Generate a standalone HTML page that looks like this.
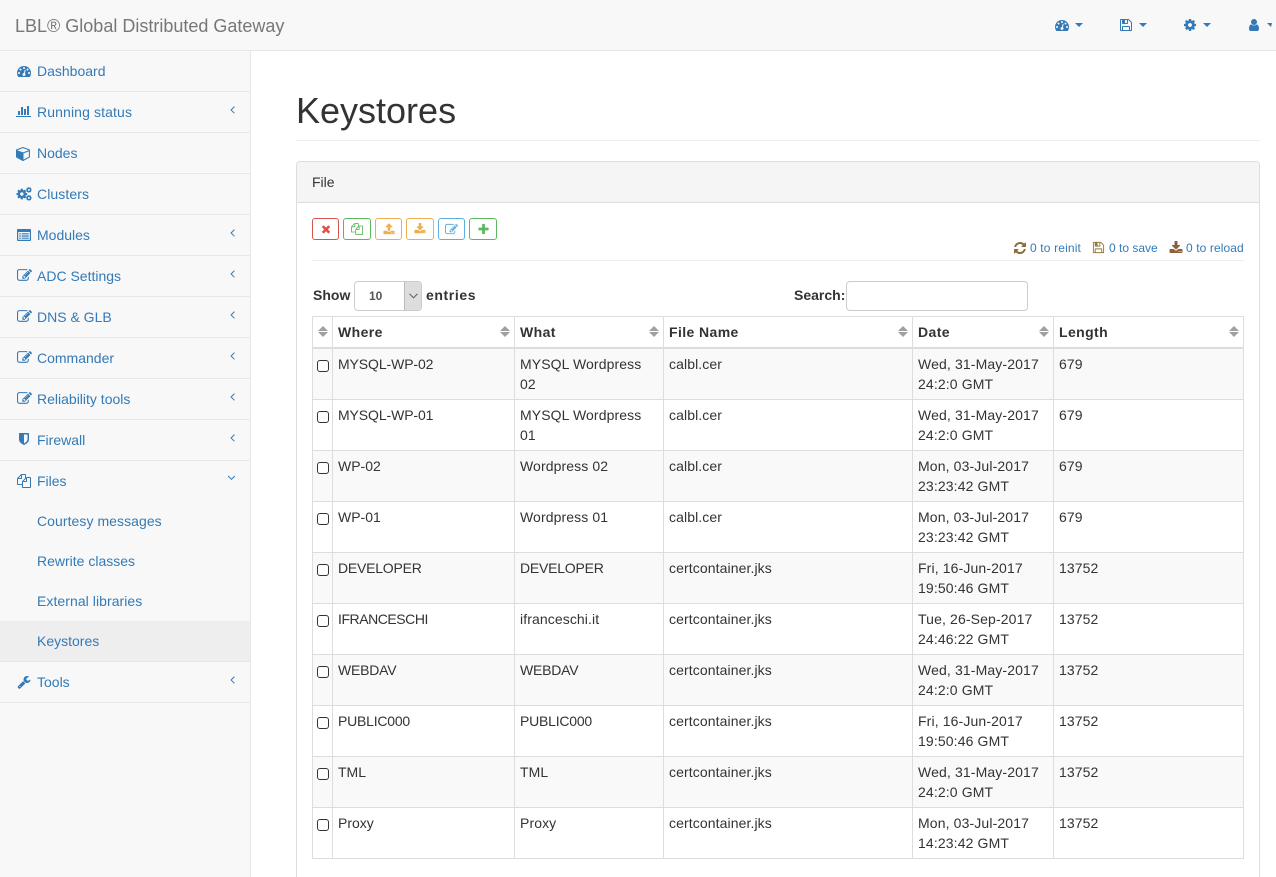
<!DOCTYPE html>
<html><head><meta charset="utf-8"><title>Keystores</title>
<style>
*{box-sizing:border-box}
html,body{margin:0;padding:0;width:1276px;height:877px;overflow:hidden;background:#fff;font:14px/20px "Liberation Sans",sans-serif;color:#333}
#w{position:absolute;left:0;top:0;width:1276px;height:877px;overflow:hidden;background:#fff}
.a,svg{position:absolute}
svg{display:block}
a{color:#337ab7;text-decoration:none}
#nav{left:0;top:0;width:1276px;height:51px;background:#f8f8f8;border-bottom:1px solid #e7e7e7}
#brand{left:15px;top:16px;font-size:18px;color:#777}
.caret{position:absolute;top:23px;width:0;height:0;border-top:4px solid #337ab7;border-left:4px solid transparent;border-right:4px solid transparent}
#side{left:0;top:51px;width:251px;height:826px;background:#f8f8f8;border-right:1px solid #e7e7e7}
.it{position:absolute;left:0;width:250px;height:41px;border-bottom:1px solid #e7e7e7}
.it a{position:absolute;left:37px;top:10px;white-space:nowrap}
.it svg{fill:#337ab7}
.sub{position:absolute;left:0;width:250px;height:40px}
.sub a{position:absolute;left:37px;top:10px}
#h1{left:296px;top:91px;font-size:36px;line-height:40px;color:#333}
#hr1{left:296px;top:140px;width:964px;height:1px;background:#eee}
#panel{left:296px;top:161px;width:964px;height:716px;border:1px solid #ddd;border-bottom:0;border-radius:4px 4px 0 0;background:#fff}
#ph{left:0;top:0;width:962px;height:41px;background:#f5f5f5;border-bottom:1px solid #ddd;border-radius:3px 3px 0 0}
#ph span{position:absolute;left:15px;top:10px}
.btn{position:absolute;top:218px;height:22px;background:#fff;border:1px solid;border-radius:3px}
.st{position:absolute;top:240px;font-size:12px;line-height:16px;color:#337ab7;white-space:nowrap;letter-spacing:.1px}
#hr2{left:312px;top:260px;width:932px;height:1px;background:#eee}
.lb{position:absolute;font-weight:700;white-space:nowrap}
#sel{left:354px;top:281px;width:68px;height:30px;border:1px solid #ccc;border-radius:4px;background:#fff;overflow:hidden}
#sel b{position:absolute;left:14px;top:4px;font-size:12px;color:#555}
#sel i{position:absolute;right:0;top:0;width:17px;height:28px;background:#ddd;border-left:1px solid #bbb}
#srch{left:846px;top:281px;width:182px;height:30px;border:1px solid #ccc;border-radius:4px;background:#fff}
table{position:absolute;left:312px;top:316px;width:931px;table-layout:fixed;border-collapse:collapse}
th,td{border:1px solid #ddd;padding:5px;vertical-align:top;text-align:left;font-size:14px;line-height:20px;position:relative}
th{height:31px;border-bottom:2px solid #ddd;padding:5px 5px 3px;background:#fff;letter-spacing:.4px}
td{height:51px}
td:nth-child(3),td:nth-child(4){letter-spacing:.1px}
td:nth-child(5){letter-spacing:.13px}
td:nth-child(6){letter-spacing:.1px}
td.u{letter-spacing:-.22px}
td.m{letter-spacing:-.1px}
td.i{letter-spacing:-.45px}
tbody tr:nth-child(odd) td{background:#f9f9f9}
tbody tr:nth-child(even) td{background:#fff}
input[type=checkbox]{appearance:none;-webkit-appearance:none;position:absolute;left:4px;top:11px;width:12px;height:12px;margin:0;border:1.5px solid #333;border-radius:3px;background:#fff}
.s{position:absolute;right:4px;top:9px;width:10px;height:12px}
.s:before{content:"";position:absolute;left:0;top:0;border-bottom:5px solid #a0a0a0;border-left:5px solid transparent;border-right:5px solid transparent}
.s:after{content:"";position:absolute;left:0;top:6px;border-top:5px solid #a0a0a0;border-left:5px solid transparent;border-right:5px solid transparent}
</style></head><body>
<div id="w">

<div class="a" id="nav">
<div class="a" id="brand">LBL® Global Distributed Gateway</div>
<svg style="left:1055px;top:18px" width="14" height="14" viewBox="0 0 1792 1792" fill="#337ab7"><path d="M384 1152q0-53-37.5-90.5t-90.5-37.5-90.5 37.5-37.5 90.5 37.5 90.5 90.5 37.5 90.5-37.5 37.5-90.5zm192-448q0-53-37.5-90.5t-90.5-37.5-90.5 37.5-37.5 90.5 37.5 90.5 90.5 37.5 90.5-37.5 37.5-90.5zm428 481l101-382q6-26-7.5-48.5t-38.5-29.5-48 6.5-30 39.5l-101 382q-60 5-107 43.5t-63 98.5q-20 77 20 146t117 89 146-20 89-117q16-60-6-117t-72-91zm660-33q0-53-37.5-90.5t-90.5-37.5-90.5 37.5-37.5 90.5 37.5 90.5 90.5 37.5 90.5-37.5 37.5-90.5zm-640-640q0-53-37.5-90.5t-90.5-37.5-90.5 37.5-37.5 90.5 37.5 90.5 90.5 37.5 90.5-37.5 37.5-90.5zm448 192q0-53-37.5-90.5t-90.5-37.5-90.5 37.5-37.5 90.5 37.5 90.5 90.5 37.5 90.5-37.5 37.5-90.5zm320 448q0 261-141 483-19 29-54 29h-1402q-35 0-54-29-141-221-141-483 0-182 71-348t191-286 286-191 348-71 348 71 286 191 191 286 71 348z"/></svg>
<span class="caret" style="left:1075px"></span>
<svg style="left:1119px;top:18px" width="14" height="14" viewBox="0 0 1792 1792" fill="#337ab7"><path d="M512 1536h768v-384h-768v384zm896 0h128v-896q0-14-10-38.5t-20-34.5l-281-281q-10-10-34-20t-39-10v416q0 40-28 68t-68 28h-576q-40 0-68-28t-28-68v-416h-128v1280h128v-416q0-40 28-68t68-28h832q40 0 68 28t28 68v416zm-384-928v-320q0-13-9.5-22.5t-22.5-9.5h-192q-13 0-22.5 9.5t-9.5 22.5v320q0 13 9.5 22.5t22.5 9.5h192q13 0 22.5-9.5t9.5-22.5zm640 32v928q0 40-28 68t-68 28h-1344q-40 0-68-28t-28-68v-1344q0-40 28-68t68-28h928q40 0 88 20t76 48l280 280q28 28 48 76t20 88z"/></svg>
<span class="caret" style="left:1139px"></span>
<svg style="left:1183px;top:18px" width="14" height="14" viewBox="0 0 1792 1792" fill="#337ab7"><path d="M1152 896q0-106-75-181t-181-75-181 75-75 181 75 181 181 75 181-75 75-181zm512-109v222q0 12-8 23t-20 13l-185 28q-19 54-39 91 35 50 107 138 10 12 10 25t-9 23q-27 37-99 108t-94 71q-12 0-26-9l-138-108q-44 23-91 38-16 136-29 186-7 28-36 28h-222q-14 0-24.5-8.5t-11.5-21.5l-28-184q-49-16-90-37l-141 107q-10 9-25 9-14 0-25-11-126-114-165-168-7-10-7-23 0-12 8-23 15-21 51-66.5t54-70.5q-27-50-41-99l-183-27q-13-2-21-12.5t-8-23.5v-222q0-12 8-23t19-13l186-28q14-46 39-92-40-57-107-138-10-12-10-24 0-10 9-23 26-36 98.5-107.5t94.5-71.5q13 0 26 10l138 107q44-23 91-38 16-136 29-186 7-28 36-28h222q14 0 24.5 8.5t11.5 21.5l28 184q49 16 90 37l142-107q9-9 24-9 13 0 25 10 129 119 165 170 7 8 7 22 0 12-8 23-15 21-51 66.5t-54 70.5q26 50 41 98l183 28q13 2 21 12.5t8 23.5z"/></svg>
<span class="caret" style="left:1203px"></span>
<svg style="left:1247px;top:18px" width="14" height="14" viewBox="0 0 1792 1792" fill="#337ab7"><path d="M1536 1399q0 109-62.5 187t-150.5 78h-854q-88 0-150.5-78t-62.5-187q0-85 8.5-160.5t31.5-152 58.5-131 94-89 134.5-34.5q131 128 313 128t313-128q76 0 134.5 34.5t94 89 58.5 131 31.5 152 8.5 160.5zm-256-887q0 159-112.5 271.5t-271.5 112.5-271.5-112.5-112.5-271.5 112.5-271.5 271.5-112.5 271.5 112.5 112.5 271.5z"/></svg>
<span class="caret" style="left:1267px;border-right-width:1px"></span>
</div>

<div class="a" id="side">
<div class="it" style="top:0"><svg style="left:17px;top:13px" width="14" height="14" viewBox="0 0 1792 1792"><path d="M384 1152q0-53-37.5-90.5t-90.5-37.5-90.5 37.5-37.5 90.5 37.5 90.5 90.5 37.5 90.5-37.5 37.5-90.5zm192-448q0-53-37.5-90.5t-90.5-37.5-90.5 37.5-37.5 90.5 37.5 90.5 90.5 37.5 90.5-37.5 37.5-90.5zm428 481l101-382q6-26-7.5-48.5t-38.5-29.5-48 6.5-30 39.5l-101 382q-60 5-107 43.5t-63 98.5q-20 77 20 146t117 89 146-20 89-117q16-60-6-117t-72-91zm660-33q0-53-37.5-90.5t-90.5-37.5-90.5 37.5-37.5 90.5 37.5 90.5 90.5 37.5 90.5-37.5 37.5-90.5zm-640-640q0-53-37.5-90.5t-90.5-37.5-90.5 37.5-37.5 90.5 37.5 90.5 90.5 37.5 90.5-37.5 37.5-90.5zm448 192q0-53-37.5-90.5t-90.5-37.5-90.5 37.5-37.5 90.5 37.5 90.5 90.5 37.5 90.5-37.5 37.5-90.5zm320 448q0 261-141 483-19 29-54 29h-1402q-35 0-54-29-141-221-141-483 0-182 71-348t191-286 286-191 348-71 348 71 286 191 191 286 71 348z"/></svg><a>Dashboard</a></div>

<div class="it" style="top:41px"><svg style="left:16px;top:11px" width="16" height="16" viewBox="0 0 2048 2048"><path d="M512 1024v512h-256v-512h256zm384-512v1024h-256v-1024h256zm1024 1152v128h-2048v-1280h128v1152h1920zm-640-896v768h-256v-768h256zm384-384v1152h-256v-1152h256z"/></svg><a style="letter-spacing:.12px">Running status</a><svg style="left:226px;top:11px" width="13" height="13" viewBox="0 0 1792 1792"><path d="M1203 544q0 13-10 23l-393 393 393 393q10 10 10 23t-10 23l-50 50q-10 10-23 10t-23-10l-466-466q-10-10-10-23t10-23l466-466q10-10 23-10t23 10l50 50q10 10 10 23z"/></svg></div>

<div class="it" style="top:82px"><svg style="left:16px;top:13px" width="15" height="15" viewBox="0 0 1792 1792"><path d="M896 1629l640-349v-636l-640 233v752zm-64-865l698-254-698-254-698 254zm832-252v768q0 35-18 65t-49 47l-704 384q-28 16-61 16t-61-16l-704-384q-31-17-49-47t-18-65v-768q0-40 23-73t61-47l704-256q22-8 44-8t44 8l704 256q38 14 61 47t23 73z"/></svg><a>Nodes</a></div>

<div class="it" style="top:123px"><svg style="left:16px;top:12px" width="16" height="16" viewBox="0 0 1792 1792"><g transform="translate(-44 202) scale(.78)"><path d="M1152 896q0-106-75-181t-181-75-181 75-75 181 75 181 181 75 181-75 75-181zm512-109v222q0 12-8 23t-20 13l-185 28q-19 54-39 91 35 50 107 138 10 12 10 25t-9 23q-27 37-99 108t-94 71q-12 0-26-9l-138-108q-44 23-91 38-16 136-29 186-7 28-36 28h-222q-14 0-24.5-8.5t-11.5-21.5l-28-184q-49-16-90-37l-141 107q-10 9-25 9-14 0-25-11-126-114-165-168-7-10-7-23 0-12 8-23 15-21 51-66.5t54-70.5q-27-50-41-99l-183-27q-13-2-21-12.5t-8-23.5v-222q0-12 8-23t19-13l186-28q14-46 39-92-40-57-107-138-10-12-10-24 0-10 9-23 26-36 98.5-107.5t94.5-71.5q13 0 26 10l138 107q44-23 91-38 16-136 29-186 7-28 36-28h222q14 0 24.5 8.5t11.5 21.5l28 184q49 16 90 37l142-107q9-9 24-9 13 0 25 10 129 119 165 170 7 8 7 22 0 12-8 23-15 21-51 66.5t-54 70.5q26 50 41 98l183 28q13 2 21 12.5t8 23.5z"/></g><g transform="translate(1066 60) scale(.42)"><path d="M1152 896q0-106-75-181t-181-75-181 75-75 181 75 181 181 75 181-75 75-181zm512-109v222q0 12-8 23t-20 13l-185 28q-19 54-39 91 35 50 107 138 10 12 10 25t-9 23q-27 37-99 108t-94 71q-12 0-26-9l-138-108q-44 23-91 38-16 136-29 186-7 28-36 28h-222q-14 0-24.5-8.5t-11.5-21.5l-28-184q-49-16-90-37l-141 107q-10 9-25 9-14 0-25-11-126-114-165-168-7-10-7-23 0-12 8-23 15-21 51-66.5t54-70.5q-27-50-41-99l-183-27q-13-2-21-12.5t-8-23.5v-222q0-12 8-23t19-13l186-28q14-46 39-92-40-57-107-138-10-12-10-24 0-10 9-23 26-36 98.5-107.5t94.5-71.5q13 0 26 10l138 107q44-23 91-38 16-136 29-186 7-28 36-28h222q14 0 24.5 8.5t11.5 21.5l28 184q49 16 90 37l142-107q9-9 24-9 13 0 25 10 129 119 165 170 7 8 7 22 0 12-8 23-15 21-51 66.5t-54 70.5q26 50 41 98l183 28q13 2 21 12.5t8 23.5z"/></g><g transform="translate(1066 955) scale(.42)"><path d="M1152 896q0-106-75-181t-181-75-181 75-75 181 75 181 181 75 181-75 75-181zm512-109v222q0 12-8 23t-20 13l-185 28q-19 54-39 91 35 50 107 138 10 12 10 25t-9 23q-27 37-99 108t-94 71q-12 0-26-9l-138-108q-44 23-91 38-16 136-29 186-7 28-36 28h-222q-14 0-24.5-8.5t-11.5-21.5l-28-184q-49-16-90-37l-141 107q-10 9-25 9-14 0-25-11-126-114-165-168-7-10-7-23 0-12 8-23 15-21 51-66.5t54-70.5q-27-50-41-99l-183-27q-13-2-21-12.5t-8-23.5v-222q0-12 8-23t19-13l186-28q14-46 39-92-40-57-107-138-10-12-10-24 0-10 9-23 26-36 98.5-107.5t94.5-71.5q13 0 26 10l138 107q44-23 91-38 16-136 29-186 7-28 36-28h222q14 0 24.5 8.5t11.5 21.5l28 184q49 16 90 37l142-107q9-9 24-9 13 0 25 10 129 119 165 170 7 8 7 22 0 12-8 23-15 21-51 66.5t-54 70.5q26 50 41 98l183 28q13 2 21 12.5t8 23.5z"/></g></svg><a style="letter-spacing:.1px">Clusters</a></div>

<div class="it" style="top:164px"><svg style="left:17px;top:13px" width="14" height="14" viewBox="0 0 14 14"><path fill-rule="evenodd" d="M1 1h12a1 1 0 0 1 1 1v10a1 1 0 0 1-1 1H1a1 1 0 0 1-1-1V2a1 1 0 0 1 1-1zm.2 3v7.8h11.6V4zM2.2 5.2h1.6v1.2H2.2zm2.4 0h7.2v1.2H4.6zM2.2 7.4h1.6v1.2H2.2zm2.4 0h7.2v1.2H4.6zM2.2 9.6h1.6v1.2H2.2zm2.4 0h7.2v1.2H4.6z"/></svg><a>Modules</a><svg style="left:226px;top:11px" width="13" height="13" viewBox="0 0 1792 1792"><path d="M1203 544q0 13-10 23l-393 393 393 393q10 10 10 23t-10 23l-50 50q-10 10-23 10t-23-10l-466-466q-10-10-10-23t10-23l466-466q10-10 23-10t23 10l50 50q10 10 10 23z"/></svg></div>

<div class="it" style="top:205px"><svg style="left:17px;top:12px" width="15" height="15" viewBox="0 0 1792 1792"><path d="M888 1184l116-116-152-152-116 116v56h96v96h56zm440-720q-16-16-33 1l-350 350q-17 17-1 33t33-1l350-350q17-17 1-33zm80 594v190q0 119-84.5 203.5t-203.5 84.5h-832q-119 0-203.5-84.5t-84.5-203.5v-832q0-119 84.5-203.5t203.5-84.5h832q63 0 117 25 15 7 18 23 3 17-9 29l-49 49q-14 14-32 8-23-6-45-6h-832q-66 0-113 47t-47 113v832q0 66 47 113t113 47h832q66 0 113-47t47-113v-126q0-13 9-22l64-64q15-15 35-7t20 29zm-96-738l288 288-672 672h-288v-288zm444 132l-92 92-288-288 92-92q28-28 68-28t68 28l152 152q28 28 28 68t-28 68z"/></svg><a>ADC Settings</a><svg style="left:226px;top:11px" width="13" height="13" viewBox="0 0 1792 1792"><path d="M1203 544q0 13-10 23l-393 393 393 393q10 10 10 23t-10 23l-50 50q-10 10-23 10t-23-10l-466-466q-10-10-10-23t10-23l466-466q10-10 23-10t23 10l50 50q10 10 10 23z"/></svg></div>

<div class="it" style="top:246px"><svg style="left:17px;top:12px" width="15" height="15" viewBox="0 0 1792 1792"><path d="M888 1184l116-116-152-152-116 116v56h96v96h56zm440-720q-16-16-33 1l-350 350q-17 17-1 33t33-1l350-350q17-17 1-33zm80 594v190q0 119-84.5 203.5t-203.5 84.5h-832q-119 0-203.5-84.5t-84.5-203.5v-832q0-119 84.5-203.5t203.5-84.5h832q63 0 117 25 15 7 18 23 3 17-9 29l-49 49q-14 14-32 8-23-6-45-6h-832q-66 0-113 47t-47 113v832q0 66 47 113t113 47h832q66 0 113-47t47-113v-126q0-13 9-22l64-64q15-15 35-7t20 29zm-96-738l288 288-672 672h-288v-288zm444 132l-92 92-288-288 92-92q28-28 68-28t68 28l152 152q28 28 28 68t-28 68z"/></svg><a>DNS &amp; GLB</a><svg style="left:226px;top:11px" width="13" height="13" viewBox="0 0 1792 1792"><path d="M1203 544q0 13-10 23l-393 393 393 393q10 10 10 23t-10 23l-50 50q-10 10-23 10t-23-10l-466-466q-10-10-10-23t10-23l466-466q10-10 23-10t23 10l50 50q10 10 10 23z"/></svg></div>

<div class="it" style="top:287px"><svg style="left:17px;top:12px" width="15" height="15" viewBox="0 0 1792 1792"><path d="M888 1184l116-116-152-152-116 116v56h96v96h56zm440-720q-16-16-33 1l-350 350q-17 17-1 33t33-1l350-350q17-17 1-33zm80 594v190q0 119-84.5 203.5t-203.5 84.5h-832q-119 0-203.5-84.5t-84.5-203.5v-832q0-119 84.5-203.5t203.5-84.5h832q63 0 117 25 15 7 18 23 3 17-9 29l-49 49q-14 14-32 8-23-6-45-6h-832q-66 0-113 47t-47 113v832q0 66 47 113t113 47h832q66 0 113-47t47-113v-126q0-13 9-22l64-64q15-15 35-7t20 29zm-96-738l288 288-672 672h-288v-288zm444 132l-92 92-288-288 92-92q28-28 68-28t68 28l152 152q28 28 28 68t-28 68z"/></svg><a>Commander</a><svg style="left:226px;top:11px" width="13" height="13" viewBox="0 0 1792 1792"><path d="M1203 544q0 13-10 23l-393 393 393 393q10 10 10 23t-10 23l-50 50q-10 10-23 10t-23-10l-466-466q-10-10-10-23t10-23l466-466q10-10 23-10t23 10l50 50q10 10 10 23z"/></svg></div>

<div class="it" style="top:328px"><svg style="left:17px;top:12px" width="15" height="15" viewBox="0 0 1792 1792"><path d="M888 1184l116-116-152-152-116 116v56h96v96h56zm440-720q-16-16-33 1l-350 350q-17 17-1 33t33-1l350-350q17-17 1-33zm80 594v190q0 119-84.5 203.5t-203.5 84.5h-832q-119 0-203.5-84.5t-84.5-203.5v-832q0-119 84.5-203.5t203.5-84.5h832q63 0 117 25 15 7 18 23 3 17-9 29l-49 49q-14 14-32 8-23-6-45-6h-832q-66 0-113 47t-47 113v832q0 66 47 113t113 47h832q66 0 113-47t47-113v-126q0-13 9-22l64-64q15-15 35-7t20 29zm-96-738l288 288-672 672h-288v-288zm444 132l-92 92-288-288 92-92q28-28 68-28t68 28l152 152q28 28 28 68t-28 68z"/></svg><a>Reliability tools</a><svg style="left:226px;top:11px" width="13" height="13" viewBox="0 0 1792 1792"><path d="M1203 544q0 13-10 23l-393 393 393 393q10 10 10 23t-10 23l-50 50q-10 10-23 10t-23-10l-466-466q-10-10-10-23t10-23l466-466q10-10 23-10t23 10l50 50q10 10 10 23z"/></svg></div>

<div class="it" style="top:369px"><svg style="left:17px;top:12px" width="14" height="14" viewBox="0 0 1792 1792"><path d="M1344 960v-640h-448v1137q119-63 213-137 235-184 235-360zm192-768v768q0 86-33.5 170.5t-83 150-118 127.5-126.5 103-121 77.5-89.5 49.5-42.5 20q-12 6-26 6t-26-6q-16-7-42.5-20t-89.5-49.5-121-77.5-126.5-103-118-127.5-83-150-33.5-170.5v-768q0-26 19-45t45-19h1152q26 0 45 19t19 45z"/></svg><a>Firewall</a><svg style="left:226px;top:11px" width="13" height="13" viewBox="0 0 1792 1792"><path d="M1203 544q0 13-10 23l-393 393 393 393q10 10 10 23t-10 23l-50 50q-10 10-23 10t-23-10l-466-466q-10-10-10-23t10-23l466-466q10-10 23-10t23 10l50 50q10 10 10 23z"/></svg></div>

<div class="it" style="top:410px;height:201px;border-bottom:0"><svg style="left:17px;top:13px" width="14" height="14" viewBox="0 0 1792 1792"><path d="M1696 384q40 0 68 28t28 68v1216q0 40-28 68t-68 28h-960q-40 0-68-28t-28-68v-288h-544q-40 0-68-28t-28-68v-672q0-40 20-88t48-76l408-408q28-28 76-48t88-20h416q40 0 68 28t28 68v328q68-40 128-40h416zm-544 213l-299 299h299v-299zm-640-384l-299 299h299v-299zm196 647l316-316v-416h-384v416q0 40-28 68t-68 28h-416v640h512v-256q0-40 20-88t48-76zm956 804v-1152h-384v416q0 40-28 68t-68 28h-416v640h896z"/></svg><a>Files</a><svg style="left:225px;top:10px" width="13" height="13" viewBox="0 0 1792 1792"><path d="M1395 736q0 13-10 23l-466 466q-10 10-23 10t-23-10l-466-466q-10-10-10-23t10-23l50-50q10-10 23-10t23 10l393 393 393-393q10-10 23-10t23 10l50 50q10 10 10 23z"/></svg></div>
<div class="sub" style="top:450px"><a style="letter-spacing:.06px">Courtesy messages</a></div>
<div class="sub" style="top:490px"><a>Rewrite classes</a></div>
<div class="sub" style="top:530px"><a style="letter-spacing:.06px">External libraries</a></div>
<div class="sub" style="top:570px;background:#eee"><a>Keystores</a></div>
<div class="it" style="top:610px;height:42px;border-top:1px solid #e7e7e7"><svg style="left:17px;top:13px" width="14" height="14" viewBox="0 0 1792 1792"><path d="M448 1472q0-26-19-45t-45-19-45 19-19 45 19 45 45 19 45-19 19-45zm644-420l-682 682q-37 37-90 37-52 0-91-37l-106-108q-38-36-38-90 0-53 38-91l681-681q39 98 114.5 173.5t173.5 114.5zm634-435q0 39-23 106-47 134-164.5 217.5t-258.5 83.5q-185 0-316.5-131.5t-131.5-316.5 131.5-316.5 316.5-131.5q58 0 121.5 16.5t107.5 46.5q16 11 16 28t-16 28l-293 169v224l193 115q5-3 79-48.5t135.5-81 70.5-35.5q15 0 23.5 10t8.5 25z"/></svg><a>Tools</a><svg style="left:226px;top:11px" width="13" height="13" viewBox="0 0 1792 1792"><path d="M1203 544q0 13-10 23l-393 393 393 393q10 10 10 23t-10 23l-50 50q-10 10-23 10t-23-10l-466-466q-10-10-10-23t10-23l466-466q10-10 23-10t23 10l50 50q10 10 10 23z"/></svg></div>
</div>

<div class="a" id="h1">Keystores</div>
<div class="a" id="hr1"></div>
<div class="a" id="panel"><div class="a" id="ph"><span>File</span></div></div>

<div class="btn" style="left:312px;width:27px;border-color:#d9534f"><svg style="left:7px;top:4px" width="12" height="12" viewBox="0 0 1792 1792" fill="#d9534f"><path d="M1490 1322q0 40-28 68l-136 136q-28 28-68 28t-68-28l-294-294-294 294q-28 28-68 28t-68-28l-136-136q-28-28-28-68t28-68l294-294-294-294q-28-28-28-68t28-68l136-136q28-28 68-28t68 28l294 294 294-294q28-28 68-28t68 28l136 136q28 28 28 68t-28 68l-294 294 294 294q28 28 28 68z"/></svg></div>
<div class="btn" style="left:343px;width:28px;border-color:#5cb85c"><svg style="left:7px;top:4px" width="12" height="12" viewBox="0 0 1792 1792" fill="#5cb85c"><path d="M1696 384q40 0 68 28t28 68v1216q0 40-28 68t-68 28h-960q-40 0-68-28t-28-68v-288h-544q-40 0-68-28t-28-68v-672q0-40 20-88t48-76l408-408q28-28 76-48t88-20h416q40 0 68 28t28 68v328q68-40 128-40h416zm-544 213l-299 299h299v-299zm-640-384l-299 299h299v-299zm196 647l316-316v-416h-384v416q0 40-28 68t-68 28h-416v640h512v-256q0-40 20-88t48-76zm956 804v-1152h-384v416q0 40-28 68t-68 28h-416v640h896z"/></svg></div>
<div class="btn" style="left:375px;width:27px;border-color:#f0ad4e"><svg style="left:7px;top:4px" width="12" height="12" viewBox="0 0 1792 1792" fill="#f0ad4e"><path d="M1344 1472q0-26-19-45t-45-19-45 19-19 45 19 45 45 19 45-19 19-45zm256 0q0-26-19-45t-45-19-45 19-19 45 19 45 45 19 45-19 19-45zm128-224v320q0 40-28 68t-68 28h-1472q-40 0-68-28t-28-68v-320q0-40 28-68t68-28h427q21 56 70.5 92t110.5 36h256q61 0 110.5-36t70.5-92h427q40 0 68 28t28 68zm-325-648q-17 40-59 40h-256v448q0 26-19 45t-45 19h-256q-26 0-45-19t-19-45v-448h-256q-42 0-59-40-17-39 14-69l448-448q18-19 45-19t45 19l448 448q31 30 14 69z"/></svg></div>
<div class="btn" style="left:406px;width:28px;border-color:#f0ad4e"><svg style="left:7px;top:4px" width="12" height="12" viewBox="0 0 1792 1792" fill="#f0ad4e"><path d="M1344 1344q0-26-19-45t-45-19-45 19-19 45 19 45 45 19 45-19 19-45zm256 0q0-26-19-45t-45-19-45 19-19 45 19 45 45 19 45-19 19-45zm128-224v320q0 40-28 68t-68 28h-1472q-40 0-68-28t-28-68v-320q0-40 28-68t68-28h465l135 136q58 56 136 56t136-56l136-136h464q40 0 68 28t28 68zm-325-569q17 41-14 70l-448 448q-18 19-45 19t-45-19l-448-448q-31-29-14-70 17-39 59-39h256v-448q0-26 19-45t45-19h256q26 0 45 19t19 45v448h256q42 0 59 39z"/></svg></div>
<div class="btn" style="left:438px;width:27px;border-color:#5bb0de"><svg style="left:6px;top:4px" width="13" height="13" viewBox="0 0 1792 1792" fill="#5bb0de"><path d="M888 1184l116-116-152-152-116 116v56h96v96h56zm440-720q-16-16-33 1l-350 350q-17 17-1 33t33-1l350-350q17-17 1-33zm80 594v190q0 119-84.5 203.5t-203.5 84.5h-832q-119 0-203.5-84.5t-84.5-203.5v-832q0-119 84.5-203.5t203.5-84.5h832q63 0 117 25 15 7 18 23 3 17-9 29l-49 49q-14 14-32 8-23-6-45-6h-832q-66 0-113 47t-47 113v832q0 66 47 113t113 47h832q66 0 113-47t47-113v-126q0-13 9-22l64-64q15-15 35-7t20 29zm-96-738l288 288-672 672h-288v-288zm444 132l-92 92-288-288 92-92q28-28 68-28t68 28l152 152q28 28 28 68t-28 68z"/></svg></div>
<div class="btn" style="left:469px;width:28px;border-color:#5cb85c"><svg style="left:7px;top:4px" width="13" height="13" viewBox="0 0 1792 1792" fill="#5cb85c"><path d="M1600 736v192q0 40-28 68t-68 28h-416v416q0 40-28 68t-68 28h-192q-40 0-68-28t-28-68v-416h-416q-40 0-68-28t-28-68v-192q0-40 28-68t68-28h416v-416q0-40 28-68t68-28h192q40 0 68 28t28 68v416h416q40 0 68 28t28 68z"/></svg></div>

<svg style="left:1013px;top:241px" width="14" height="14" viewBox="0 0 1792 1792" fill="#8a6d3b"><path d="M1639 1056q0 5-1 7-64 268-268 434.5t-478 166.5q-146 0-282.5-55t-243.5-157l-129 129q-19 19-45 19t-45-19-19-45v-448q0-26 19-45t45-19h448q26 0 45 19t19 45-19 45l-137 137q71 66 161 102t187 36q134 0 250-65t186-179q11-17 53-117 8-23 30-23h192q13 0 22.5 9.5t9.5 22.5zm25-800v448q0 26-19 45t-45 19h-448q-26 0-45-19t-19-45 19-45l138-138q-148-137-349-137-134 0-250 65t-186 179q-11 17-53 117-8 23-30 23h-199q-13 0-22.5-9.5t-9.5-22.5v-7q65-268 270-434.5t480-166.5q146 0 284 55.5t245 156.5l130-129q19-19 45-19t45 19 19 45z"/></svg>
<span class="st" style="left:1030px;letter-spacing:.15px">0 to reinit</span>
<svg style="left:1092px;top:241px" width="13" height="13" viewBox="0 0 1792 1792" fill="#96793a"><path d="M512 1536h768v-384h-768v384zm896 0h128v-896q0-14-10-38.5t-20-34.5l-281-281q-10-10-34-20t-39-10v416q0 40-28 68t-68 28h-576q-40 0-68-28t-28-68v-416h-128v1280h128v-416q0-40 28-68t68-28h832q40 0 68 28t28 68v416zm-384-928v-320q0-13-9.5-22.5t-22.5-9.5h-192q-13 0-22.5 9.5t-9.5 22.5v320q0 13 9.5 22.5t22.5 9.5h192q13 0 22.5-9.5t9.5-22.5zm640 32v928q0 40-28 68t-68 28h-1344q-40 0-68-28t-28-68v-1344q0-40 28-68t68-28h928q40 0 88 20t76 48l280 280q28 28 48 76t20 88z"/></svg>
<span class="st" style="left:1109px;letter-spacing:0">0 to save</span>
<svg style="left:1169px;top:241px" width="14" height="14" viewBox="0 0 1792 1792" fill="#8b6239"><path d="M1344 1344q0-26-19-45t-45-19-45 19-19 45 19 45 45 19 45-19 19-45zm256 0q0-26-19-45t-45-19-45 19-19 45 19 45 45 19 45-19 19-45zm128-224v320q0 40-28 68t-68 28h-1472q-40 0-68-28t-28-68v-320q0-40 28-68t68-28h465l135 136q58 56 136 56t136-56l136-136h464q40 0 68 28t28 68zm-325-569q17 41-14 70l-448 448q-18 19-45 19t-45-19l-448-448q-31-29-14-70 17-39 59-39h256v-448q0-26 19-45t45-19h256q26 0 45 19t19 45v448h256q42 0 59 39z"/></svg>
<span class="st" style="left:1186px">0 to reload</span>
<div class="a" id="hr2"></div>

<span class="lb" style="left:313px;top:285px">Show</span>
<div class="a" id="sel"><b>10</b><i><svg style="left:4px;top:11px" width="9" height="6" viewBox="0 0 9 6"><path d="M.5.8l4 4 4-4" fill="none" stroke="#555" stroke-width="1"/></svg></i></div>
<span class="lb" style="left:426px;top:285px;letter-spacing:.6px">entries</span>
<span class="lb" style="left:794px;top:285px">Search:</span>
<div class="a" id="srch"></div>

<table>
<colgroup><col style="width:20px"><col style="width:182px"><col style="width:149px"><col style="width:249px"><col style="width:141px"><col style="width:190px"></colgroup>
<thead><tr><th><i class="s"></i></th><th>Where<i class="s"></i></th><th>What<i class="s"></i></th><th>File Name<i class="s"></i></th><th>Date<i class="s"></i></th><th>Length<i class="s"></i></th></tr></thead>
<tbody>
<tr><td><input type="checkbox"></td><td class="m">MYSQL-WP-02</td><td>MYSQL Wordpress 02</td><td>calbl.cer</td><td>Wed, 31-May-2017 24:2:0 GMT</td><td>679</td></tr>
<tr><td><input type="checkbox"></td><td class="m">MYSQL-WP-01</td><td>MYSQL Wordpress 01</td><td>calbl.cer</td><td>Wed, 31-May-2017 24:2:0 GMT</td><td>679</td></tr>
<tr><td><input type="checkbox"></td><td>WP-02</td><td>Wordpress 02</td><td>calbl.cer</td><td>Mon, 03-Jul-2017 23:23:42 GMT</td><td>679</td></tr>
<tr><td><input type="checkbox"></td><td>WP-01</td><td>Wordpress 01</td><td>calbl.cer</td><td>Mon, 03-Jul-2017 23:23:42 GMT</td><td>679</td></tr>
<tr><td><input type="checkbox"></td><td class="u">DEVELOPER</td><td class="u">DEVELOPER</td><td>certcontainer.jks</td><td>Fri, 16-Jun-2017 19:50:46 GMT</td><td>13752</td></tr>
<tr><td><input type="checkbox"></td><td class="i">IFRANCESCHI</td><td>ifranceschi.it</td><td>certcontainer.jks</td><td>Tue, 26-Sep-2017 24:46:22 GMT</td><td>13752</td></tr>
<tr><td><input type="checkbox"></td><td class="u">WEBDAV</td><td class="u">WEBDAV</td><td>certcontainer.jks</td><td>Wed, 31-May-2017 24:2:0 GMT</td><td>13752</td></tr>
<tr><td><input type="checkbox"></td><td class="u">PUBLIC000</td><td class="u">PUBLIC000</td><td>certcontainer.jks</td><td>Fri, 16-Jun-2017 19:50:46 GMT</td><td>13752</td></tr>
<tr><td><input type="checkbox"></td><td>TML</td><td>TML</td><td>certcontainer.jks</td><td>Wed, 31-May-2017 24:2:0 GMT</td><td>13752</td></tr>
<tr><td><input type="checkbox"></td><td>Proxy</td><td>Proxy</td><td>certcontainer.jks</td><td>Mon, 03-Jul-2017 14:23:42 GMT</td><td>13752</td></tr>
</tbody></table>
</div>
</body></html>
